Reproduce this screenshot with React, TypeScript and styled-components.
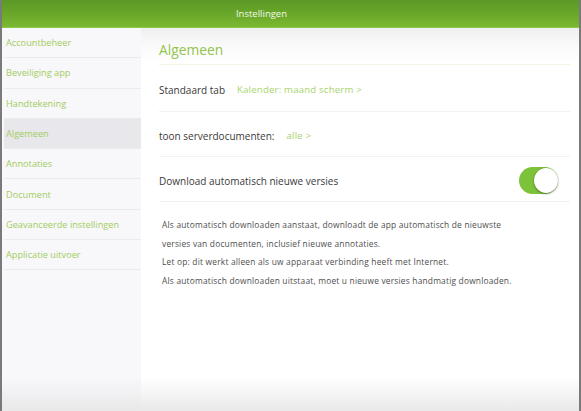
import React, { useState } from "react";
import styled, { createGlobalStyle } from "styled-components";

const GlobalStyle = createGlobalStyle`
  html, body {
    margin: 0;
    padding: 0;
    height: 100%;
  }
  body {
    font-family: "Open Sans", "Noto Sans", sans-serif;
    background: #7a7a7a;
  }
  #root {
    height: 100%;
  }
  * {
    box-sizing: border-box;
  }
`;

const Screen = styled.div`
  height: 411px;
  margin: 0 2px;
  display: flex;
  flex-direction: column;
  background: #fff;
  overflow: hidden;
`;

const Header = styled.header`
  height: 28px;
  flex-shrink: 0;
  display: flex;
  align-items: center;
  justify-content: center;
  padding-right: 58px;
  background: linear-gradient(180deg, #5a9925 0%, #6aa82b 55%, #7bb931 100%);
  border-bottom: 1px solid #8cc64a;
  color: #f2f8ea;
  font-size: 9.5px;
`;

const Body = styled.div`
  flex: 1;
  display: flex;
  position: relative;
  &:after {
    content: "";
    position: absolute;
    left: 0;
    right: 0;
    bottom: 0;
    height: 34px;
    background: linear-gradient(180deg, rgba(236, 236, 236, 0) 0%, #e9e9e9 100%);
    pointer-events: none;
  }
`;

const Sidebar = styled.nav`
  width: 139px;
  flex-shrink: 0;
  background: #f8f7fa;
  display: flex;
  flex-direction: column;
`;

const NavItem = styled.div<{ $active?: boolean }>`
  height: 30.3px;
  display: flex;
  align-items: center;
  padding-left: 2px;
  margin-left: 2px;
  border-bottom: 1px solid #ebebee;
  background: ${(p) => (p.$active ? "#e8e7eb" : "transparent")};
  color: #a2cd60;
  font-size: 9.2px;
`;

const Main = styled.main`
  flex: 1;
  padding: 0 9px 0 18px;
  background: linear-gradient(180deg, #efefef 0px, #f9f9f9 16px, #ffffff 34px);
`;

const Title = styled.h1`
  margin: 0;
  height: 37px;
  display: flex;
  align-items: center;
  padding-top: 7px;
  font-size: 13.8px;
  font-weight: 400;
  color: #92c44e;
  border-bottom: 1px solid #f0f5e4;
`;

const Row = styled.div<{ $h: number }>`
  height: ${(p) => p.$h}px;
  display: flex;
  align-items: center;
  padding-top: 3px;
  border-bottom: 1px solid #f1f3ec;
  font-size: 10px;
  color: #3a3a3a;
`;

const Label = styled.span`
  margin-right: 12px;
`;

const Value = styled.span`
  color: #a9d36d;
  font-size: 9.6px;
  letter-spacing: 0.2px;
`;

const Spacer = styled.div`
  flex: 1;
`;

const Toggle = styled.button<{ $on: boolean }>`
  width: 39px;
  height: 27px;
  margin-right: 12px;
  border: none;
  padding: 0;
  border-radius: 14px;
  background: ${(p) => (p.$on ? "#7cc23a" : "#e4e4e4")};
  position: relative;
  cursor: pointer;
  span {
    position: absolute;
    top: 1px;
    left: ${(p) => (p.$on ? "15px" : "1px")};
    width: 24px;
    height: 25px;
    border-radius: 50%;
    background: #fff;
    box-shadow: 0 1px 2px rgba(0, 0, 0, 0.35), 0 0 0 1px rgba(0, 0, 0, 0.06);
  }
`;

const Notes = styled.div`
  padding: 13px 0 0 3px;
  display: flex;
  flex-direction: column;
`;

const Note = styled.p`
  margin: 0;
  height: 18.7px;
  display: flex;
  align-items: center;
  font-size: 8.4px;
  letter-spacing: 0.2px;
  color: #4e4e4e;
  white-space: nowrap;
`;

const items = [
  "Accountbeheer",
  "Beveiliging app",
  "Handtekening",
  "Algemeen",
  "Annotaties",
  "Document",
  "Geavanceerde instellingen",
  "Applicatie uitvoer",
];

export default function App() {
  const [auto, setAuto] = useState(true);

  return (
    <>
      <GlobalStyle />
      <Screen>
        <Header>Instellingen</Header>
        <Body>
          <Sidebar>
            {items.map((it) => (
              <NavItem key={it} $active={it === "Algemeen"}>
                {it}
              </NavItem>
            ))}
          </Sidebar>
          <Main>
            <Title>Algemeen</Title>
            <Row $h={47}>
              <Label>Standaard tab</Label>
              <Value>Kalender: maand scherm &gt;</Value>
            </Row>
            <Row $h={45}>
              <Label>toon serverdocumenten:</Label>
              <Value>alle &gt;</Value>
            </Row>
            <Row $h={45}>
              <Label>Download automatisch nieuwe versies</Label>
              <Spacer />
              <Toggle $on={auto} onClick={() => setAuto(!auto)}>
                <span />
              </Toggle>
            </Row>
            <Notes>
              <Note>
                Als automatisch downloaden aanstaat, downloadt de app automatisch de nieuwste
              </Note>
              <Note>versies van documenten, inclusief nieuwe annotaties.</Note>
              <Note>Let op: dit werkt alleen als uw apparaat verbinding heeft met Internet.</Note>
              <Note>
                Als automatisch downloaden uitstaat, moet u nieuwe versies handmatig downloaden.
              </Note>
            </Notes>
          </Main>
        </Body>
      </Screen>
    </>
  );
}
